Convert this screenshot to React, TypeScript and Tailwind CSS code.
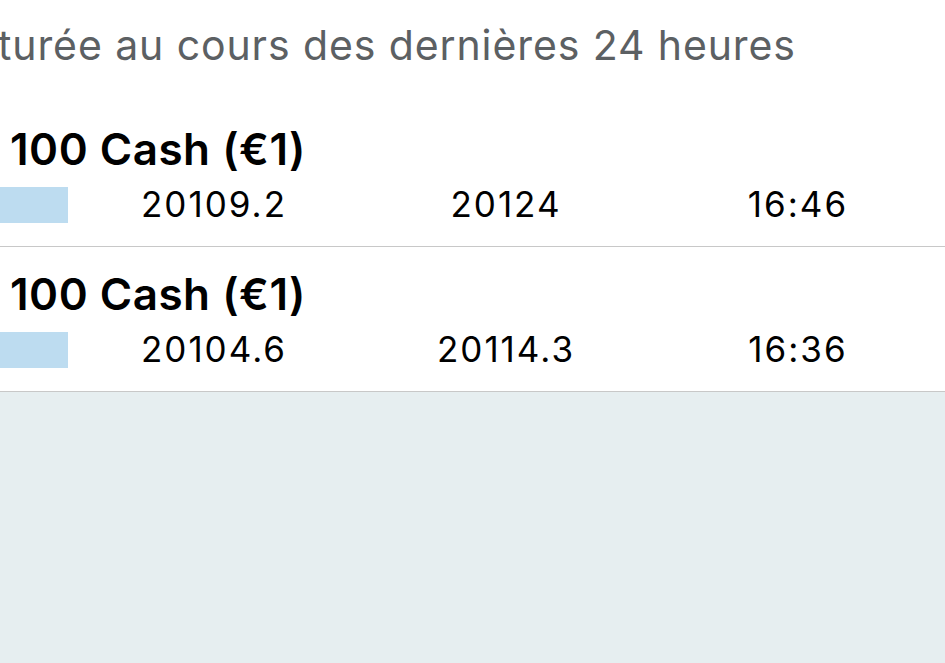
import React from "react";

const rows = [
  { title: "100 Cash (€1)", a: "20109.2", b: "20124", c: "16:46" },
  { title: "100 Cash (€1)", a: "20104.6", b: "20114.3", c: "16:36" },
];

export default function App() {
  return (
    <div className="w-[945px] h-[663px] bg-white flex flex-col overflow-hidden font-['Inter','Noto_Sans',sans-serif]">
      <div className="h-[102px] pt-[25px] flex items-start">
        <span className="text-[41px] leading-none tracking-[0.9px] text-[#5c6063] ml-[-2px] whitespace-nowrap">
          turée au cours des dernières 24 heures
        </span>
      </div>
      {rows.map((r, i) => (
        <div key={i} className="h-[145px] border-b border-[#c8c8c8] flex flex-col pt-[25px]">
          <div className="h-[44px] pl-[10px]">
            <span className="text-[44px] leading-none font-semibold tracking-[0.5px] text-black whitespace-nowrap">
              {r.title}
            </span>
          </div>
          <div className="flex items-start h-[36px] mt-[16px]">
            <div className="w-[68px] h-[36px] bg-[#bddcf0]" />
            <div className="w-[292px] text-center text-[35px] leading-none tracking-[2px] text-black">{r.a}</div>
            <div className="w-[292px] text-center text-[35px] leading-none tracking-[2px] text-black">{r.b}</div>
            <div className="w-[292px] text-center text-[35px] leading-none tracking-[2px] text-black">{r.c}</div>
          </div>
        </div>
      ))}
      <div className="flex-1 bg-[#e6eef0]" />
    </div>
  );
}
